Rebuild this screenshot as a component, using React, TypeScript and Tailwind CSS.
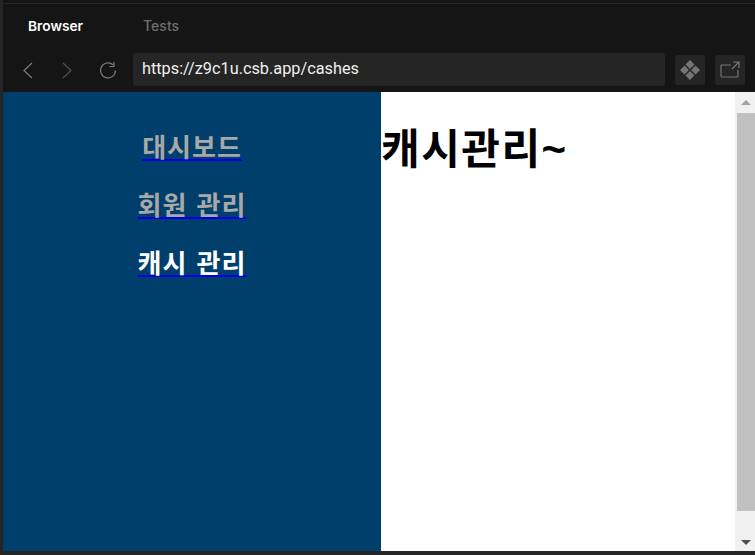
const cjk = "font-['Liberation_Sans','Noto_Sans_CJK_KR',sans-serif]";

function NavLink({ label, active }: { label: string; active?: boolean }) {
  return (
    <li className="mb-[22px] h-9 leading-9 text-center">
      <a
        href="#"
        className={`text-[26px] font-bold tracking-[1px] [word-spacing:1px] underline decoration-[#0000ee] decoration-2 underline-offset-[2px] ${active ? "text-white" : "text-[#a8a8a8]"}`}
      >
        {label}
      </a>
    </li>
  );
}

export default function App() {
  return (
    <div className="flex h-[555px] w-[755px] flex-col overflow-hidden border-l-[3px] border-[#262626] bg-[#151515] font-['Inter',sans-serif]">
      <div className="h-[4px] shrink-0 border-b border-[#262626] bg-[#151515]" />
      <div className="flex h-[46px] shrink-0 items-center gap-[60px] pb-[1px] pl-[25px]">
        <span className="text-[13.75px] font-semibold text-white">Browser</span>
        <span className="mb-[2px] text-[14px] font-medium text-[#6e6e6e]">Tests</span>
      </div>
      <div className="flex h-[42px] shrink-0 items-center pl-[15px] pr-[9px] pb-[3px]">
        <svg width="20" height="20" viewBox="0 0 20 20" fill="none" stroke="#7c7c7c" strokeWidth="1.2">
          <path d="M14 3 L6 10.5 L14 18" />
        </svg>
        <svg className="ml-[19px]" width="20" height="20" viewBox="0 0 20 20" fill="none" stroke="#505050" strokeWidth="1.2">
          <path d="M6 3 L14 10.5 L6 18" />
        </svg>
        <svg className="ml-[21px]" width="20" height="20" viewBox="0 0 20 20" fill="none" stroke="#7c7c7c" strokeWidth="1.2">
          <path d="M17.5 10.5 A7.5 7.5 0 1 1 15 4.8" />
          <path d="M16 2 V6.5 H11.5" />
        </svg>
        <div className="ml-[15px] flex h-[33px] w-[532px] items-center rounded-[3px] bg-[#252525] pl-[9px] font-['Roboto',sans-serif] text-[16.3px] text-[#f0f0f0]">
          https://z9c1u.csb.app/cashes
        </div>
        <div className="ml-[10px] flex h-[30px] w-[30px] items-center justify-center rounded-[3px] bg-[#252525]">
          <svg width="20" height="20" viewBox="0 0 20 20" fill="#757575">
            <path d="M10 0 L14.5 4.5 L10 9 L5.5 4.5 Z" />
            <path d="M10 11 L14.5 15.5 L10 20 L5.5 15.5 Z" />
            <path d="M4.5 5.5 L9 10 L4.5 14.5 L0 10 Z" />
            <path d="M15.5 5.5 L20 10 L15.5 14.5 L11 10 Z" />
          </svg>
        </div>
        <div className="ml-[10px] flex h-[30px] w-[30px] items-center justify-center rounded-[3px] bg-[#252525]">
          <svg width="20" height="18" viewBox="0 0 20 18" fill="none" stroke="#757575" strokeWidth="1.2">
            <path d="M11 4 H2 Q1 4 1 5 V15 Q1 16 2 16 H17 Q18 16 18 15 V9" />
            <path d="M13 1 H19 V7 M19 1 L12 8" />
          </svg>
        </div>
      </div>
      <div className="flex min-h-0 flex-1">
        <nav className="w-[378px] shrink-0 bg-[#003f6b] pt-[38px]">
          <ul className={cjk}>
            <NavLink label="대시보드" />
            <NavLink label="회원 관리" />
            <NavLink label="캐시 관리" active />
          </ul>
        </nav>
        <main className="flex-1 bg-white">
          <h1 className={`${cjk} mt-[28px] text-[42px] font-bold leading-[60px] tracking-[1.5px] text-black`}>캐시관리~</h1>
        </main>
        <div className="flex w-5 shrink-0 flex-col items-center bg-[#f1f1f1] pl-[2px]">
          <div className="flex h-[21px] w-full items-center justify-center">
            <div className="h-0 w-0 border-x-[5px] border-b-[5px] border-x-transparent border-b-[#a3a3a3]" />
          </div>
          <div className="h-[398px] w-full bg-[#c1c1c1]" />
          <div className="flex w-full flex-1 items-end justify-center pb-[6px]">
            <div className="h-0 w-0 border-x-[5px] border-t-[5px] border-x-transparent border-t-[#505050]" />
          </div>
        </div>
      </div>
      <div className="h-[4px] shrink-0 bg-[#262626]" />
    </div>
  );
}
